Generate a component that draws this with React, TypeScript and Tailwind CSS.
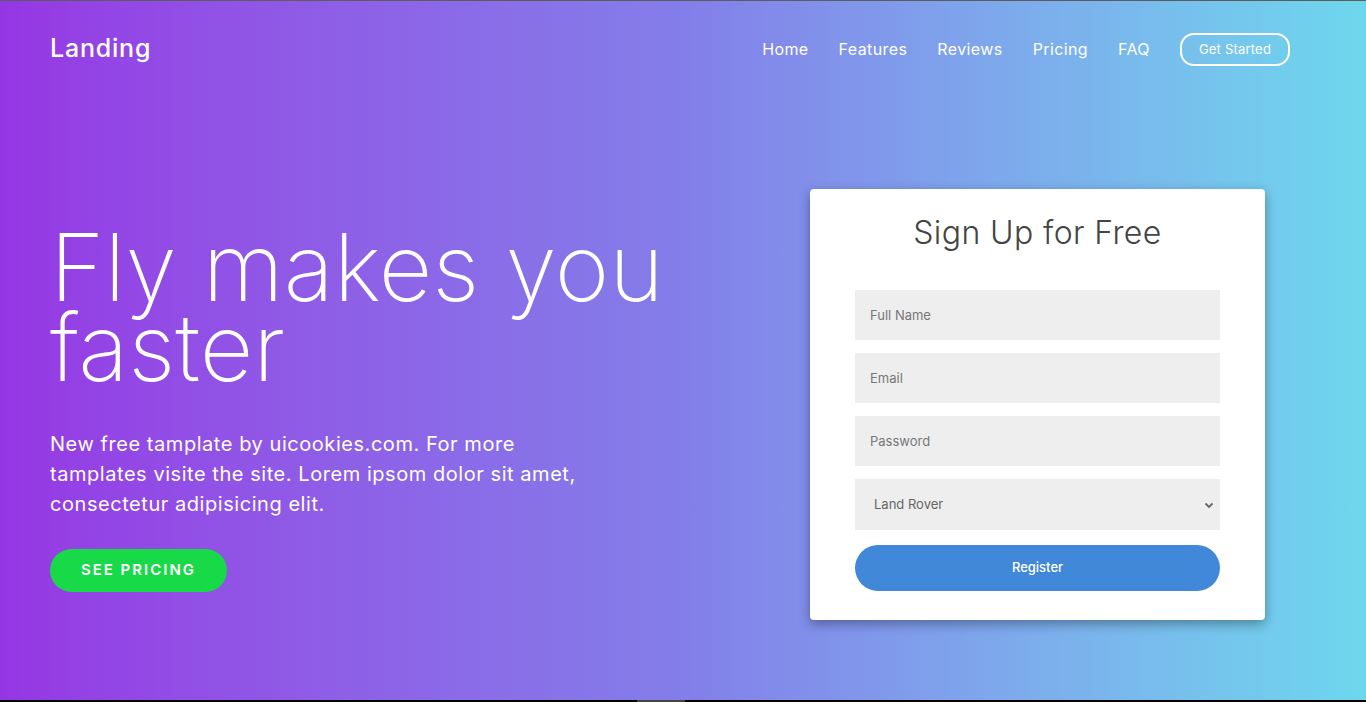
import React from 'react';

const font = { fontFamily: 'Inter, "Noto Sans", sans-serif' };

const App: React.FC = () => {
  return (
    <div
      className="h-[702px] w-full overflow-hidden bg-gradient-to-r from-[#9536e4] via-[#837ee9] to-[#6dd7ed] border-t border-[#5c5c5c] flex flex-col"
      style={font}
    >
      {/* Navigation */}
      <nav className="h-[96px] px-[50px] pr-[76px] flex items-center justify-between">
        <div className="text-[25px] font-medium text-white tracking-[0.8px]">Landing</div>
        <div className="flex items-center text-white text-[16px] tracking-[0.4px]">
          <a href="#" className="mr-[30px]">Home</a>
          <a href="#" className="mr-[30px]">Features</a>
          <a href="#" className="mr-[30px]">Reviews</a>
          <a href="#" className="mr-[30px]">Pricing</a>
          <a href="#" className="mr-[30px]">FAQ</a>
          <a
            href="#"
            className="h-[33px] w-[110px] rounded-[14px] border-2 border-white flex items-center justify-center text-[13px] tracking-[0.2px] pt-[1px]"
          >
            Get Started
          </a>
        </div>
      </nav>

      {/* Hero */}
      <div className="flex-1 flex px-[50px] pr-[101px] justify-between">
        <div className="pt-[130px] text-white">
          <h1 className="text-[93px] font-extralight leading-[80px] tracking-[0px]">
            Fly makes you
            <br />
            faster
          </h1>
          <p className="mt-[42px] text-[20px] leading-[30px] tracking-[0.55px]">
            New free tamplate by uicookies.com. For more
            <br />
            tamplates visite the site. Lorem ipsom dolor sit amet,
            <br />
            consectetur adipisicing elit.
          </p>
          <button className="mt-[30px] h-[43px] w-[177px] rounded-full bg-[#18d947] text-white text-[15px] font-semibold tracking-[2px]">
            SEE PRICING
          </button>
        </div>

        <div className="mt-[92px] w-[455px] h-[431px] bg-white rounded-[4px] shadow-[0_4px_12px_rgba(0,0,0,0.35)] px-[45px] pt-[22px]">
          <h2 className="text-center text-[32px] font-light text-[#444] leading-[44px] tracking-[0.4px]">
            Sign Up for Free
          </h2>
          <div className="mt-[35px] flex flex-col gap-[13px]">
            <input
              placeholder="Full Name"
              className="h-[50px] w-full bg-[#eeeeee] px-[15px] text-[13px] text-[#555] placeholder:text-[#777] outline-none"
            />
            <input
              placeholder="Email"
              className="h-[50px] w-full bg-[#eeeeee] px-[15px] text-[13px] text-[#555] placeholder:text-[#777] outline-none"
            />
            <input
              placeholder="Password"
              type="password"
              className="h-[50px] w-full bg-[#eeeeee] px-[15px] text-[13px] text-[#555] placeholder:text-[#777] outline-none"
            />
            <div className="relative h-[51px] w-full bg-[#eeeeee] flex items-center px-[19px] text-[13px] text-[#666]">
              Land Rover
              <svg
                className="absolute right-[6px] top-1/2 -translate-y-1/2"
                width="10"
                height="10"
                viewBox="0 0 10 10"
              >
                <path d="M1.5 3.5 L5 7 L8.5 3.5" fill="none" stroke="#666" strokeWidth="1.8" />
              </svg>
            </div>
            <button className="mt-[2px] h-[46px] w-full rounded-full bg-[#4188d8] text-white text-[13px] font-medium">
              Register
            </button>
          </div>
        </div>
      </div>
      <div className="h-[2px] bg-black flex justify-center">
        <div className="w-[48px] ml-[-44px] bg-[#444]" />
      </div>
    </div>
  );
};

export default App;
